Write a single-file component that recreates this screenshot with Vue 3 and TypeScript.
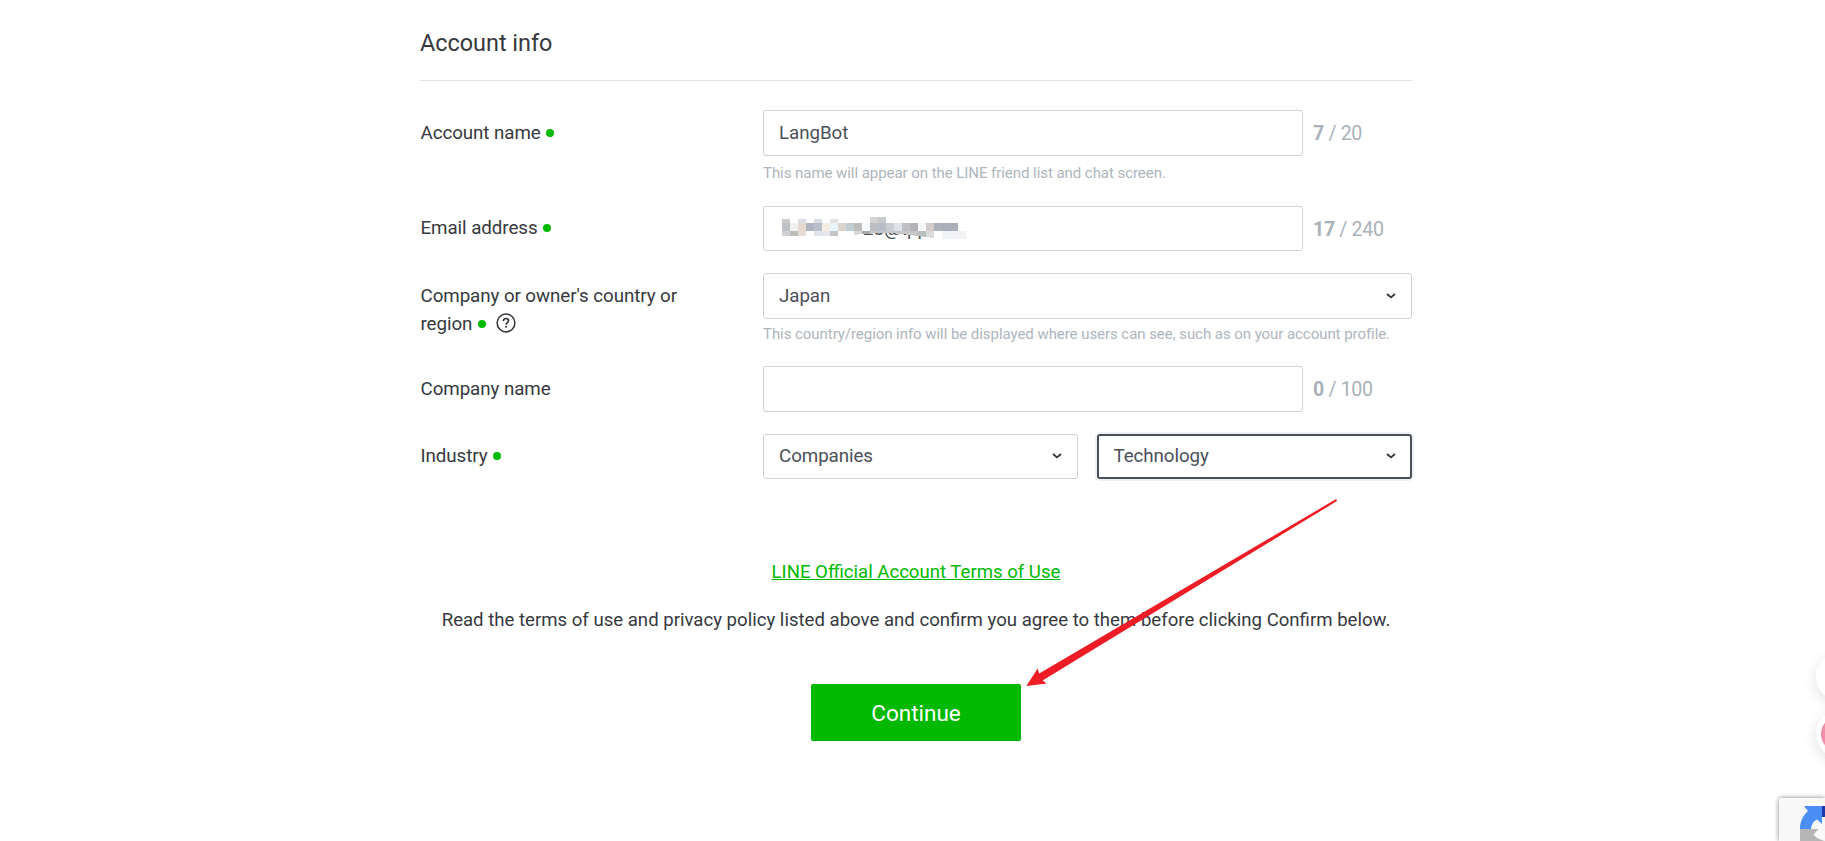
<script setup lang="ts">
interface Cell {
  x: number
  y: number
  h: number
  fill: string
}

const upper = ['#c9c9cb', '', '#dadde3', '', '#d9dde1', '', '#e0e1e1']
const middle = [
  '#bcc2c6', '#f0f0ee', '#e7dad3', '#afb4c0', '#b9bfca', '#f4ede1', '#e8f5ff', '#dfd4cd', '#bfccd6', '#bcbcbb',
  '#f9fcff', '#bebec2', '#b8bec9', '#cacdd1', '#dfe2e8', '#bfc0c6', '#b4b2b7', '#f7f7f8', '#d4cac9', '#acb0bb',
  '#a8b0bd', '#abaeb8',
]
const lower = [
  '#d0d1d7', '#bdbdba', '#e9dcd4', '', '#e0e3e8', '#e4e6eb', '#c3c6c6',
]

const row = (fills: string[], y: number, h: number): Cell[] =>
  fills.map((fill, i) => ({ x: i * 8, y, h, fill })).filter((c) => c.fill !== '')

const cells: Cell[] = [
  ...row(upper, 3, 4),
  ...row(middle, 7, 8),
  ...row(lower, 15, 5),
  { x: 88, y: 1, h: 6, fill: '#d3d4d2' },
  { x: 96, y: 1, h: 6, fill: '#c7cbce' },
  { x: 160, y: 15, h: 8, fill: '#f1f3f9' },
  { x: 168, y: 15, h: 8, fill: '#f2f3f6' },
  { x: 176, y: 15, h: 8, fill: '#f3f3f3' },
]
</script>

<template>
  <div class="page">
    <main class="form">
      <h2 class="title">Account info</h2>

      <div class="row name">
        <div class="label">Account name<i class="dot"></i></div>
        <div class="field">
          <div class="line">
            <div class="box input">LangBot</div>
            <span class="count"><b>7</b> / 20</span>
          </div>
          <p class="hint">This name will appear on the LINE friend list and chat screen.</p>
        </div>
      </div>

      <div class="row email">
        <div class="label">Email address<i class="dot"></i></div>
        <div class="field">
          <div class="line">
            <div class="box input short">
              <span class="masked">28@qq</span>
              <svg class="mosaic" width="184" height="24" viewBox="0 0 184 24" shape-rendering="crispEdges">
                <rect x="0" y="0" width="176" height="15" fill="#fff" />
                <rect v-for="(c, i) in cells" :key="i" :x="c.x" :y="c.y" width="8" :height="c.h" :fill="c.fill" />
                <path d="M72 15h16v3h-9l-7 1z" fill="#d8d8d6" />
                <path d="M80 15h8v3h-8z" fill="#aaa9a5" />
                <path d="M88 15h48v5l-24-3h-24z" fill="#c5c7c8" />
                <path d="M136 15h8v6l-8-1z" fill="#babfc0" />
                <path d="M144 15h8v7l-8-1z" fill="#d9dbda" />
              </svg>
            </div>
            <span class="count"><b>17</b> / 240</span>
          </div>
        </div>
      </div>

      <div class="row country">
        <div class="label">
          Company or owner's country or<br />region<i class="dot"></i>
          <svg class="help" width="20" height="20" viewBox="0 0 20 20">
            <circle cx="10" cy="10" r="8.9" fill="none" stroke="#303338" stroke-width="1.5" />
            <path d="M7.3 8.1C7.4 6.4 8.5 5.5 10 5.5s2.6.9 2.6 2.3c0 1.8-2.5 1.9-2.5 4" fill="none" stroke="#303338" stroke-width="1.6" />
            <rect x="9.2" y="13" width="1.7" height="1.7" fill="#303338" />
          </svg>
        </div>
        <div class="field">
          <div class="box select">
            Japan
            <svg class="chev" width="10" height="6" viewBox="0 0 10 6"><path d="M1 1l4 3.4L9 1" /></svg>
          </div>
          <p class="hint tight">This country/region info will be displayed where users can see, such as on your account profile.</p>
        </div>
      </div>

      <div class="row company">
        <div class="label">Company name</div>
        <div class="field">
          <div class="line">
            <div class="box input"></div>
            <span class="count"><b>0</b> / 100</span>
          </div>
        </div>
      </div>

      <div class="row industry">
        <div class="label">Industry<i class="dot"></i></div>
        <div class="field pair">
          <div class="box select short">
            Companies
            <svg class="chev" width="10" height="6" viewBox="0 0 10 6"><path d="M1 1l4 3.4L9 1" /></svg>
          </div>
          <div class="box select short focused">
            Technology
            <svg class="chev" width="10" height="6" viewBox="0 0 10 6"><path d="M1 1l4 3.4L9 1" /></svg>
          </div>
        </div>
      </div>

      <div class="terms"><a class="link">LINE Official Account Terms of Use</a></div>
      <p class="note">
        Read the terms of use and privacy policy listed above and confirm you agree to them before clicking Confirm below.
      </p>
      <button class="continue" type="button">Continue</button>
    </main>

    <svg class="arrow" width="320" height="194" viewBox="1020 496 320 194">
      <path d="M1026.3 686L1037.7 668.5L1039.2 673.5L1336.2 499L1337 501L1042.6 680.4L1046.8 683.6Z" fill="#ee1c24" />
    </svg>

    <div class="bubble first"></div>
    <div class="bubble second"><span class="pink"></span></div>
    <div class="captcha">
      <svg width="25" height="35" viewBox="0 0 25 35">
        <path d="M0 23C0 15 3.2 9.500 8 5L4 0H22V18L17 13.500C13 15.500 11.500 19 11 23Z" fill="#4a8df5" />
        <path d="M22 0h3v11h-3z" fill="#1c3aa9" />
        <path d="M0 23h18.500l-5 5.500c2 3 5.500 5 11.500 6.500H0z" fill="#b5b5b5" />
      </svg>
    </div>
  </div>
</template>

<style>
body {
  margin: 0;
  background: #fff;
}
</style>

<style scoped>
.page {
  position: relative;
  width: 100%;
  height: 841px;
  overflow: hidden;
  background: #fff;
  color: #36393e;
  font-family: Roboto, "Liberation Sans", sans-serif;
  font-size: 18.75px;
  letter-spacing: -0.07px;
}
.form {
  box-sizing: border-box;
  width: 992px;
  margin-left: 420px;
}
.title {
  box-sizing: border-box;
  height: 81px;
  margin: 0 0 29px;
  padding-top: 27px;
  border-bottom: 1px solid #e1e3e5;
  font-size: 23.4px;
  font-weight: 400;
  letter-spacing: 0;
  line-height: 33px;
}
.row {
  display: flex;
}
.name { height: 96px; }
.email { height: 67px; }
.country { height: 93px; }
.company { height: 68px; }
.industry { height: 124px; }
.label {
  box-sizing: border-box;
  width: 343px;
  padding: 9px 0 0 0.5px;
  line-height: 28px;
}
.email .label,
.industry .label {
  padding-top: 8px;
}
.field {
  flex: 1;
}
.line {
  display: flex;
  align-items: center;
}
.pair {
  display: flex;
  gap: 19px;
}
.pair .box {
  padding-bottom: 1px;
}
.dot {
  display: inline-block;
  width: 8px;
  height: 8px;
  margin-left: 5.5px;
  border-radius: 50%;
  background: #00b900;
  vertical-align: 2px;
}
.help {
  margin-left: 6.5px;
  vertical-align: -3px;
}
.country .dot {
  margin-right: 4px;
}
.box {
  box-sizing: border-box;
  display: flex;
  align-items: center;
  height: 46px;
  padding: 0 15px;
  border: 1px solid #cdd2d9;
  border-radius: 3px;
  color: #4b5059;
  line-height: 28px;
}
.box.short {
  height: 45px;
}
.input {
  position: relative;
  width: 540px;
}
.select {
  flex: 1;
  justify-content: space-between;
}
.focused {
  padding: 0 14px 0 15px;
  border: 2px solid #484f5a;
  box-shadow: 0 0 0 2px #f0f1f4;
}
.chev {
  fill: none;
  stroke: #303338;
  stroke-width: 1.8;
}
.count {
  margin-left: 10px;
  padding-top: 1px;
  color: #a9b2bb;
  font-size: 19.6px;
  letter-spacing: -0.35px;
}
.hint {
  margin: 6px 0 0;
  color: #adb5bd;
  font-size: 15px;
  letter-spacing: -0.055px;
  line-height: 22px;
  white-space: nowrap;
}
.hint.tight {
  margin-top: 4px;
}
.masked {
  margin-left: 84px;
}
.mosaic {
  position: absolute;
  left: 18px;
  top: 9px;
}
.terms {
  text-align: center;
  line-height: 28px;
}
.link {
  color: #00b900;
  font-size: 18.6px;
  letter-spacing: 0;
  text-decoration: underline;
}
.note {
  margin: 20px 0 0;
  font-size: 18.6px;
  letter-spacing: 0;
  text-align: center;
  line-height: 28px;
  white-space: nowrap;
}
.continue {
  display: block;
  width: 210px;
  height: 57px;
  margin: 50px auto 0;
  padding: 0;
  border: 0;
  border-radius: 2px;
  background: #00b900;
  color: #fff;
  font: 22.5px Roboto, "Liberation Sans", sans-serif;
}
.arrow {
  position: absolute;
  left: 1020px;
  top: 496px;
}
.bubble {
  position: absolute;
  left: 1816px;
  width: 48px;
  height: 48px;
  border-radius: 50%;
  background: #fff;
  box-shadow: 0 4px 14px rgba(0, 0, 0, 0.12);
}
.first { top: 653px; }
.second { top: 710px; }
.pink {
  display: block;
  width: 36px;
  height: 36px;
  margin: 6px 0 0 5px;
  border-radius: 50%;
  background: #f08fa9;
}
.captcha {
  position: absolute;
  left: 1779px;
  top: 798px;
  width: 46px;
  height: 43px;
  border-radius: 2px 0 0 0;
  background: #f9f9f9;
  box-shadow: 0 0 5px gray;
}
.captcha svg {
  display: block;
  margin: 8px 0 0 21px;
}
</style>
